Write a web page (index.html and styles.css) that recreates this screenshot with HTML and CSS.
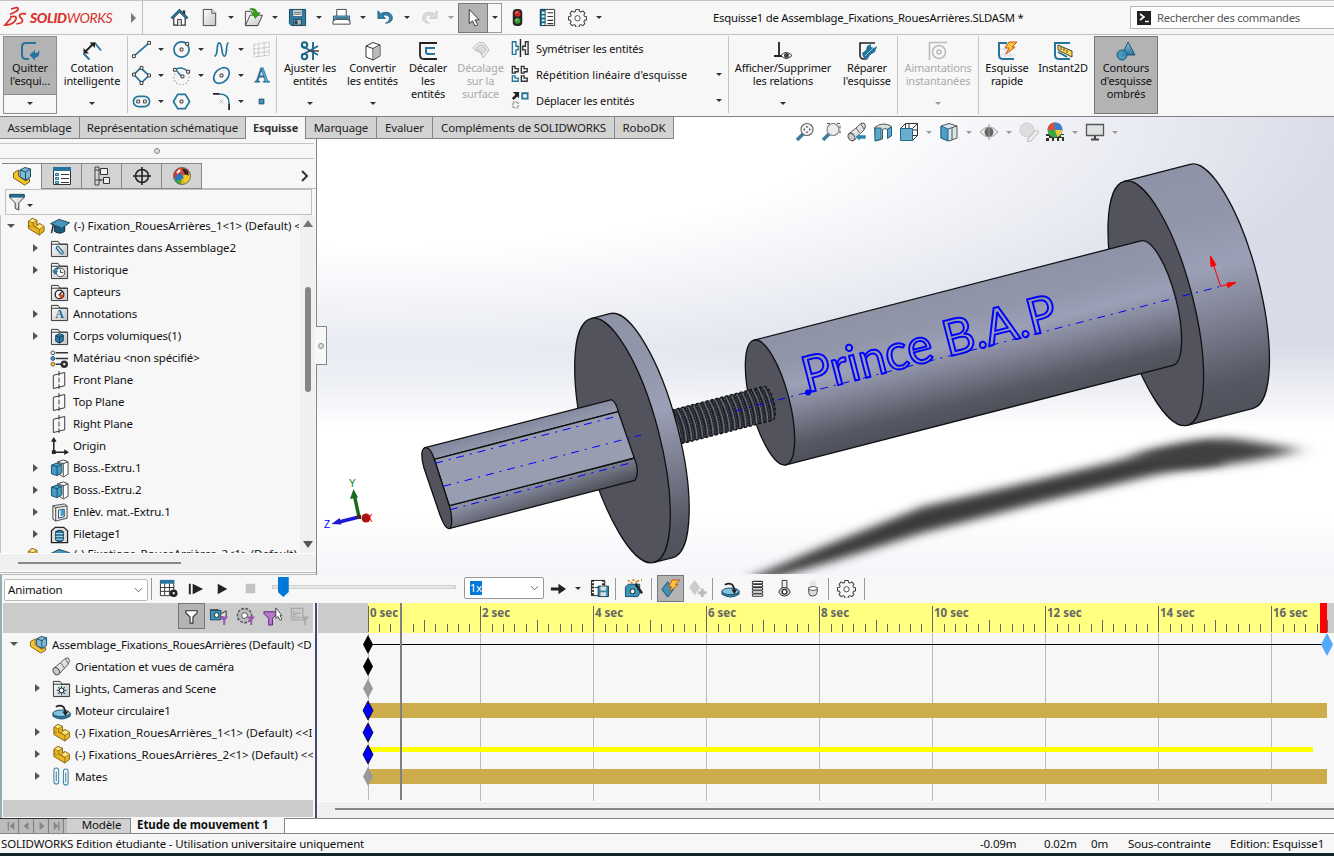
FILE: index.html
```html
<!DOCTYPE html>
<html lang="fr">
<head>
<meta charset="utf-8">
<title>SOLIDWORKS</title>
<link rel="stylesheet" href="styles.css">
</head>
<body>
<svg class="defs" width="0" height="0">
<defs>
<linearGradient id="blu" x1="0" y1="0" x2="0" y2="1"><stop offset="0" stop-color="#8ec6de"/><stop offset="1" stop-color="#24759c"/></linearGradient>
<linearGradient id="gry" x1="0" y1="0" x2="1" y2="1"><stop offset="0" stop-color="#fff"/><stop offset="1" stop-color="#c4c4c4"/></linearGradient>
<linearGradient id="body" x1="0" y1="0" x2="0" y2="1"><stop offset="0" stop-color="#8f93a8"/><stop offset=".22" stop-color="#9296ab"/><stop offset=".42" stop-color="#9ca0b6"/><stop offset=".6" stop-color="#828597"/><stop offset=".88" stop-color="#555762"/><stop offset="1" stop-color="#4f515b"/></linearGradient>
</defs>
<symbol id="home" viewBox="0 0 20 20"><path d="M4 10v8h12v-8L10 4z" fill="#fff" stroke="#333" stroke-width="1.3"/><path d="M8 18v-6h4v6" fill="#ddd" stroke="#333"/><path d="M13.5 2.500h2.500v4h-2.500z" fill="#333"/><path d="M1.500 11L10 2.500 18.500 11" fill="none" stroke="#16506f" stroke-width="2.600"/><path d="M2 11L10 3l8 8" fill="none" stroke="#3d9cc5" stroke-width="1"/></symbol>
<symbol id="page" viewBox="0 0 20 20"><path d="M3.500 1.500h9l4 4v13h-13z" fill="url(#gry)" stroke="#444"/><path d="M12.500 1.500v4h4" fill="#fff" stroke="#444"/></symbol>
<symbol id="open" viewBox="0 0 20 20"><path d="M1.500 3.500h6l1 2h6v13h-13z" fill="#eee" stroke="#444"/><path d="M1.500 18.500l5-11h13l-5 11z" fill="url(#gry)" stroke="#444"/><path d="M6 1c4-1 7 0 8 4h3l-5 6-4-6h3c-1-2-3-3-5-4z" fill="#36a315" stroke="#1e720a" stroke-width=".6"/></symbol>
<symbol id="save" viewBox="0 0 20 20"><path d="M1.500 1.500h17v17h-15l-2-2z" fill="#2f7da4" stroke="#17445d"/><path d="M5 2h10v7H5z" fill="#eef4f8" stroke="#17445d" stroke-width=".7"/><path d="M6 4.500h8M6 6.500h8" stroke="#555"/><path d="M6 12h8v6H6z" fill="#bbb" stroke="#17445d"/><path d="M7 13h3v4H7z" fill="#17445d"/></symbol>
<symbol id="print" viewBox="0 0 20 20"><path d="M5 9V1.500h10V9" fill="#fff" stroke="#444"/><path d="M1.500 8.500h17v7h-17z" fill="url(#blu)" stroke="#1b5877"/><path d="M1 14l3-2h12l3 2v3H1z" fill="#fff" stroke="#444"/><path d="M3 10.500h14" stroke="#124b66"/></symbol>
<symbol id="undo" viewBox="0 0 20 20"><path d="M2 3v8h8L7 8c5-2 8 1 7 4-.5 2-2 3-4 4 6 0 8-4 7-7-1-4-6-6-12-3z" fill="#2f83ad" stroke="#185572" stroke-width=".8"/></symbol>
<symbol id="redo" viewBox="0 0 20 20"><path d="M18 3v8h-8l3-3c-5-2-8 1-7 4 .5 2 2 3 4 4-6 0-8-4-7-7 1-4 6-6 12-3z" fill="#ddd" stroke="#c4c4c4" stroke-width=".8"/></symbol>
<symbol id="cursor" viewBox="0 0 20 20"><path d="M5.500 1.500v15l3.500-3 2.500 5.500 3-1.500-3-5h4.500z" fill="#fff" stroke="#333"/></symbol>
<symbol id="traffic" viewBox="0 0 20 20"><rect x="5" y="1" width="10" height="18" rx="4" fill="#292929"/><circle cx="10" cy="6" r="3" fill="#d9231a"/><circle cx="10" cy="13.500" r="3" fill="#38a02a"/><path d="M8 5l2-1M8 13l2-1" stroke="#fff" stroke-width=".8"/></symbol>
<symbol id="list" viewBox="0 0 20 20"><path d="M2.500 1.500h15v17h-15z" fill="#fff" stroke="#333"/><path d="M2.500 1.500h5v17h-5z" fill="#1e6c94" stroke="#18465f"/><path d="M4 4h3v2H4zM4 8h3v2H4zM4 12h3v2H4zM4 16h3v2H4z" fill="#dff"/><path d="M10 5h6M10 9h6M10 13h6M10 16.500h6" stroke="#333" stroke-width="1.200"/></symbol>
<symbol id="gear" viewBox="0 0 20 20"><path d="M8.300 1.500h3.400l.5 2.100 1.500.7 1.900-1.200 2.200 2.300-1.100 1.900.6 1.500 2.200.5v3.200l-2.200.5-.6 1.500 1.100 1.900-2.200 2.200-1.900-1.100-1.500.6-.5 2.200H8.300l-.5-2.200-1.500-.6-1.900 1.100-2.200-2.200 1.100-1.900-.6-1.500-2.200-.5V9.300l2.200-.5.6-1.500-1.100-1.900 2.200-2.300 1.900 1.200 1.500-.7z" fill="#f7f7f7" stroke="#444" stroke-width="1.100" stroke-linejoin="round"/><circle cx="10" cy="10.800" r="2.800" fill="#fff" stroke="#444"/></symbol>
<symbol id="exit" viewBox="0 0 20 20"><path d="M16 2H6q-4 0-4 4v8q0 4 4 4h3" fill="none" stroke="#24749b" stroke-width="2"/><path d="M9.500 14l5.500-5v3h1.500q2-.5 2.500-3.500 1.500 8-4 8v3z" fill="#24749b"/></symbol>
<symbol id="dim" viewBox="0 0 20 20"><path d="M1.500 12.500l6 6M12.500 1.500l6.500 8" stroke="#24749b" stroke-width="1.800"/><path d="M3 11l9-9" stroke="#222" stroke-width="2"/><path d="M1.500 7v5.500H7zM7.500 1.500H13V7z" fill="#222"/></symbol>
<symbol id="line" viewBox="0 0 20 20"><path d="M2 17L18 3" stroke="#24749b" stroke-width="1.800"/><path d="M.5 15.500h3v3h-3zM16.500 1.500h3v3h-3z" fill="#fff" stroke="#333"/></symbol>
<symbol id="circle" viewBox="0 0 20 20"><circle cx="10" cy="10" r="8" fill="none" stroke="#24749b" stroke-width="1.800"/><path d="M8.500 8.500h3v3h-3zM14.500 2.500h3v3h-3z" fill="#fff" stroke="#333"/></symbol>
<symbol id="spline" viewBox="0 0 20 20"><path d="M2.500 17C7 17 4 3 7.500 3c4 0 2 14 5.500 14 3.500 0 1-14 4.500-14" fill="none" stroke="#24749b" stroke-width="1.800"/></symbol>
<symbol id="planegray" viewBox="0 0 20 20"><path d="M2 5l16-3v14L2 18zM7 4v14M13 3v14M2 9.500l16-2M2 14l16-2" fill="none" stroke="#bbb" stroke-dasharray="2 1"/></symbol>
<symbol id="rect" viewBox="0 0 20 20"><path d="M2 9l7-7 9 8-8 7.500z" fill="none" stroke="#24749b" stroke-width="1.800"/><path d="M.5 7.500h3v3h-3zM8.500.5h3v3h-3zM16.500 8.500h3v3h-3zM8.500 16.500h3v3h-3z" fill="#fff" stroke="#333"/></symbol>
<symbol id="arc" viewBox="0 0 20 20"><path d="M3 8a8 8 0 1 0 14 0" fill="none" stroke="#aaa" stroke-width="1.500" stroke-dasharray="1.500 2"/><path d="M3 4c5-3 10-2 14 2M10 11L5 5" fill="none" stroke="#24749b" stroke-width="1.500"/><path d="M1.500 2.500h3v3h-3zM15.500 4.500h3v3h-3zM9.500 9.500h3v3h-3z" fill="#fff" stroke="#333"/></symbol>
<symbol id="ellipse" viewBox="0 0 20 20"><ellipse cx="10" cy="10" rx="9.500" ry="6.800" transform="rotate(-45 10 10)" fill="none" stroke="#24749b" stroke-width="1.800"/><path d="M8.500 8.500h3v3h-3z" fill="#fff" stroke="#333"/></symbol>
<symbol id="slot" viewBox="0 0 20 20"><rect x="1.500" y="4.500" width="17" height="11" rx="5.500" fill="#f7f7f7" stroke="#24749b" stroke-width="1.800"/><path d="M5 8.500h3v3H5zM12 8.500h3v3h-3z" fill="#fff" stroke="#333"/></symbol>
<symbol id="hex" viewBox="0 0 20 20"><path d="M6 2.500h8l4.500 7.500-4.500 7.500H6L1.500 10z" fill="none" stroke="#24749b" stroke-width="1.800"/><path d="M8.500 8.500h3v3h-3z" fill="#fff" stroke="#333"/></symbol>
<symbol id="fillet" viewBox="0 0 20 20"><path d="M1 2h7M18 12v7" stroke="#222" stroke-width="1.800"/><path d="M8 2c7 0 10 3 10 10" fill="none" stroke="#24749b" stroke-width="1.600"/><path d="M8 8l4 4M12 8l-4 4" stroke="#aaa" stroke-width=".8"/></symbol>
<symbol id="point" viewBox="0 0 20 20"><path d="M7.500 7.500h5v5h-5z" fill="#4097c0" stroke="#17506c"/></symbol>
<symbol id="trim" viewBox="0 0 20 20"><path d="M13 1v18M2 14L18 5M2 5l16 9" stroke="#247095" stroke-width="2"/><circle cx="4.500" cy="4" r="2.700" fill="none" stroke="#1b668b" stroke-width="2"/><circle cx="4.500" cy="15.500" r="2.700" fill="none" stroke="#1b668b" stroke-width="2"/><path d="M8 10h11" stroke="#444" stroke-width="1.500"/></symbol>
<symbol id="convert" viewBox="0 0 20 20"><path d="M3 5l7-3.500L17 4v11l-7 4-7-3z" fill="#fff" stroke="#333"/><path d="M3 5l7 2.500L17 4M10 7.500V19" fill="none" stroke="#333"/><path d="M10.500 8L16.500 5v9.500l-6 3.500z" fill="#bbb"/></symbol>
<symbol id="offset" viewBox="0 0 20 20"><path d="M19 2H2v12q0 4 4 4h13" fill="none" stroke="#222" stroke-width="1.800"/><path d="M17 7H8v4q0 2 2 2h7" fill="none" stroke="#24749b" stroke-width="2"/></symbol>
<symbol id="surf" viewBox="0 0 20 20"><path d="M2 7q7-9 12-4l4 6-6 8q-2-7-7-7z" fill="#eee" stroke="#bbb"/><path d="M5 7q5-5 8-2l2 4-4 4q-2-4-5-4z" fill="#ddd" stroke="#bbb"/></symbol>
<symbol id="mirror" viewBox="0 0 20 20"><path d="M10.500 0v20" stroke="#222" stroke-width="1.600"/><path d="M1.500 3h4v5H8v4H5.500v5h-4z" fill="none" stroke="#24749b" stroke-width="1.500"/><path d="M19 3h-3v5h-3v4h3v5h3z" fill="none" stroke="#333" stroke-width="1.500"/></symbol>
<symbol id="pattern" viewBox="0 0 20 20"><g fill="none" stroke-width="1.500"><g stroke="#333"><path d="M1.500 1.500h3v2.500H8v3.500H4.500v1.500h-3zM11.500 1.500h3v2.500H18v3.500h-3.500v1.500h-3zM11.500 12h3v2.500H18v3.500h-6.500z"/></g><path d="M1.500 12h3v2.500H8v3.500H1.500z" stroke="#24749b"/></g></symbol>
<symbol id="move" viewBox="0 0 20 20"><path d="M2 1h7v7L7 6l-4 4-2-2 4-4z" fill="#222"/><path d="M12.500 2.500h6v6h-6z" fill="#fff" stroke="#24749b" stroke-width="2"/><path d="M2 12.500h6v6H2z" fill="none" stroke="#aaa" stroke-width="2" stroke-dasharray="2 1"/></symbol>
<symbol id="rel" viewBox="0 0 20 20"><path d="M6 1v14M1 15h9" stroke="#222" stroke-width="1.800"/><path d="M8 14.500q5-6 11 0-6 6-11 0z" fill="#fff" stroke="#333"/><circle cx="13.500" cy="14.500" r="2.500" fill="#444"/></symbol>
<symbol id="repair" viewBox="0 0 20 20"><path d="M18 2H3v12q0 4 4 4h2" fill="none" stroke="#222" stroke-width="1.600"/><path d="M6 16l4 3 3-5 5-3 2-6-3 2-3-1V3l-4 2-1 4-4 3z" fill="#24749b"/><path d="M8 15l8-8" stroke="#8cc8e2"/></symbol>
<symbol id="snap" viewBox="0 0 20 20"><path d="M1.500 19V1.500H19" fill="none" stroke="#bbb" stroke-width="1.600"/><circle cx="11" cy="11" r="6.500" fill="none" stroke="#bbb" stroke-width="1.600"/><circle cx="11" cy="11" r="2" fill="none" stroke="#bbb" stroke-width="1.600"/></symbol>
<symbol id="rapid" viewBox="0 0 20 20"><path d="M8 3v15M13 3v16M3 8h16M3 14h16" stroke="#ccc" stroke-width=".7"/><path d="M10 2H2v12q0 4 4 4h11" fill="none" stroke="#24749b" stroke-width="2"/><path d="M12 1h8l-5 5h3l-9 7 3-6H8z" fill="#fcc33c" stroke="#c25519"/></symbol>
<symbol id="inst" viewBox="0 0 20 20"><path d="M17 2H2v12q0 4 4 4h11" fill="none" stroke="#24749b" stroke-width="2"/><path d="M5 4l14 6v6L5 9z" fill="#ffd94b" stroke="#444"/><path d="M8 6v3M11 7v3M14 9v3" stroke="#444"/><path d="M5 11l9 5" stroke="#24749b" stroke-width="2"/></symbol>
<symbol id="shaded" viewBox="0 0 20 20"><path d="M12 1l7 13H6z" fill="url(#blu)" stroke="#1b5877"/><circle cx="6" cy="14" r="5" fill="#3990b8" fill-opacity=".85" stroke="#1b5877"/></symbol>
<symbol id="zoomfit" viewBox="0 0 20 20"><path d="M8 12l-6 6" stroke="#3d7e9f" stroke-width="3.500"/><circle cx="12" cy="7.500" r="6" fill="#f5f7fa" stroke="#666" stroke-width="1.200"/><path d="M12 3.500l1.500 2h-3zM12 11.500l1.500-2h-3zM8 7.500l2-1.500v3zM16 7.500l-2-1.500v3z" fill="#555"/></symbol>
<symbol id="zoomarea" viewBox="0 0 20 20"><path d="M6 1.500h13v12" fill="none" stroke="#555" stroke-dasharray="3 2"/><path d="M8 12l-6 6" stroke="#3d7e9f" stroke-width="3.500"/><circle cx="12" cy="7.500" r="6" fill="#e9edf1" stroke="#888" stroke-width="1.200"/></symbol>
<symbol id="scope" viewBox="0 0 20 20"><path d="M1.500 12L9 6l5-4.500 3-.5 1.500 3-1.500 4-4 4-5.500 6z" fill="url(#gry)" stroke="#555"/><ellipse cx="4.500" cy="15" rx="3" ry="4" transform="rotate(-35 4.500 15)" fill="#ccc" stroke="#555"/><path d="M9 6l4.500 6M14 2l3 5" stroke="#666"/></symbol>
<symbol id="prev" viewBox="0 0 20 20"><use href="#scope"/><path d="M8 15l5-4v2h6v4h-6v2z" fill="#2a84ad" stroke="#f5f5f5" stroke-width=".6"/></symbol>
<symbol id="section" viewBox="0 0 20 20"><path d="M1.500 5.500Q10-1 18.500 4.500v9l-4 3v-9q-3-2-5 0V17l-7 2z" fill="#ddd" stroke="#555"/><path d="M2 6h6v11l-6 2zM14.500 7l4-2v9l-4 2z" fill="#5ba7c9" stroke="#1f688c"/></symbol>
<symbol id="orient" viewBox="0 0 20 20"><path d="M6.500 1.500h12v12h-12zM1.500 6.500l5-5M13.500 18.500l5-5M13.500 6.500l5-5M10 2v5M14 8h4" fill="none" stroke="#333"/><path d="M1.500 6.500h12v12h-12z" fill="#69afcd" stroke="#1f688c"/></symbol>
<symbol id="display" viewBox="0 0 20 20"><path d="M2 4l8-2.500L18 4v12l-8 3-8-3z" fill="#d7e7ee" stroke="#555"/><path d="M2 4l7 3v12l-7-3z" fill="#4d9fc3" stroke="#1f688c"/><path d="M9 7l9-3M13 6v12" stroke="#555"/></symbol>
<symbol id="eye" viewBox="0 0 20 20"><path d="M1 10q9-10 18 0-9 10-18 0z" fill="#eee" stroke="#999"/><circle cx="10" cy="10" r="4.500" fill="#666"/><path d="M10 2v16" stroke="#999"/></symbol>
<symbol id="editapp" viewBox="0 0 20 20"><circle cx="8" cy="8" r="7" fill="#ddd" stroke="#ccc"/><path d="M9 17l8-9 3 2-8 9-4 1z" fill="#eee" stroke="#bbb"/></symbol>
<symbol id="ball" viewBox="0 0 20 20"><circle cx="10" cy="10" r="8.500" fill="#f1c928"/><path d="M10 10L2 13Q0 4 8 1.700z" fill="#d9392e"/><path d="M10 10L8 1.700Q16 1 18 7z" fill="#d44a38"/><path d="M10 10l8-3q2 7-5 11z" fill="#f1c928"/><path d="M10 10l3 8q-3 1-5 0z" fill="#e9b51e"/><path d="M10 10L2 13q2 5 7 5.500z" fill="#3fa73c"/><path d="M3 10l6-3 3 5-8 3z" fill="#2b74c0"/><circle cx="10" cy="10" r="8.500" fill="none" stroke="#555" stroke-width=".8"/><path d="M10 2.500q6 0 7 7l-4-1z" fill="#292929"/><path d="M5 7l3-3" stroke="#fff" stroke-width="2"/></symbol>
<symbol id="sceneball" viewBox="0 0 20 20"><path d="M1 12h18v7H1z" fill="#333"/><path d="M1 14h3v2H1zM4 16h3v3H4zM9 16h3v3H9zM14 16h3v3h-3zM16 13h3v2h-3z" fill="#eee"/><circle cx="10" cy="8" r="7.500" fill="#3aa648"/><path d="M10 8H2.500A7.500 7.500 0 0 1 9 .6z" fill="#e24b3a"/><path d="M10 8L9 .6q8-1 8.500 7.400z" fill="#3b7fd1"/><path d="M10 8h7.500q-1 5-5 7z" fill="#e9c83d"/></symbol>
<symbol id="monitor" viewBox="0 0 20 20"><path d="M1.500 2.500h17v11h-17z" fill="#dde3e3" stroke="#555" stroke-width="1.300"/><path d="M10 14v3M6 17.500h8" stroke="#444" stroke-width="2"/></symbol>
<symbol id="part" viewBox="0 0 20 20"><path d="M2 4.500l4-3 5 2V8l3-1 4.500 3v5l-5 4L2 12z" fill="#e9b51e" stroke="#806017"/><path d="M2 4.500l4-3 5 2-4 2.500zM9 10.500L14 7l4.500 3-5 3z" fill="#ffe57a" stroke="#806017" stroke-width=".7"/><path d="M7 6v4l2 .5 4.500 2.500v6M2 9l3 1" fill="none" stroke="#806017" stroke-width=".8"/></symbol>
<symbol id="assem" viewBox="0 0 20 20"><path d="M1.500 7l5-3v6l7 5 4-2v3l-5 3-11-7z" fill="#f4c42c" stroke="#806017"/><path d="M8 4l5-2.500L18.500 3v8l-5 3L8 11z" fill="#7fbbd6" stroke="#1a4d68"/><path d="M8 4l5.500 2 5-3M13.500 6v8" fill="none" stroke="#1a4d68"/></symbol>
<symbol id="props" viewBox="0 0 20 20"><path d="M1.500 1.500h17v17h-17z" fill="#fff" stroke="#333"/><path d="M1 1h18v4H1z" fill="#24749b"/><path d="M3.500 7.500h3v2h-3zM3.500 11.500h3v2h-3zM3.500 15.500h3v2h-3z" fill="#9cd" stroke="#24749b"/><path d="M9 8.500h8M9 12.500h8M9 16.500h8" stroke="#333" stroke-width="1.200"/></symbol>
<symbol id="config" viewBox="0 0 20 20"><path d="M3 1v18M3 4h6M3 14h6M3 1h4v18H3" fill="none" stroke="#444"/><path d="M8.500 2.500h7v6h-7zM11.500 11.500h6v6h-6z" fill="#eee" stroke="#333"/><path d="M7 14h4" stroke="#333"/></symbol>
<symbol id="target" viewBox="0 0 20 20"><circle cx="10" cy="10" r="6.500" fill="none" stroke="#222" stroke-width="1.600"/><path d="M10 1v18M1 10h18" stroke="#222" stroke-width="1.600"/></symbol>
<symbol id="funnel" viewBox="0 0 20 20"><path d="M2 2h16v3l-6 6v8l-4-2v-6L2 5z" fill="url(#gry)" stroke="#333"/><path d="M2 1.500h16v3H2z" fill="#24749b" stroke="#17506c"/></symbol>
<symbol id="cap" viewBox="0 0 20 20"><path d="M4 10v5q6 4 11 0v-5z" fill="#1e5c7e" stroke="#123"/><path d="M0 7l9-4.500L20 6l-8 6z" fill="#4596ba" stroke="#15425a"/><path d="M3 8l-2 9" stroke="#222" stroke-width="1.500"/></symbol>
<symbol id="folder" viewBox="0 0 20 20"><path d="M1.500 18.500v-16h7l2 3h8v13z" fill="url(#gry)" stroke="#333"/><path d="M1.500 5.500h17" stroke="#333"/></symbol>
<symbol id="fmate" viewBox="0 0 20 20"><use href="#folder"/><path d="M6 9l5 6q3 2 3-1L9 8q-3-1-2 2l4 5" fill="none" stroke="#24749b" stroke-width="1.300"/></symbol>
<symbol id="fhist" viewBox="0 0 20 20"><use href="#folder"/><circle cx="11" cy="12" r="4.500" fill="#fff" stroke="#444"/><path d="M4 11q1-5 6-4M3 10l2 4 3-3z" fill="#24749b" stroke="#24749b"/><path d="M11 9v3h3" stroke="#333" fill="none"/></symbol>
<symbol id="fsens" viewBox="0 0 20 20"><use href="#folder"/><circle cx="10" cy="12" r="4.500" fill="#fff" stroke="#222" stroke-width="1.400"/><path d="M10 12h4.500A4.500 4.500 0 0 1 10 16.500z" fill="#e4421f"/><path d="M9 13l4-4" stroke="#222" stroke-width="1.300"/></symbol>
<symbol id="fbody" viewBox="0 0 20 20"><use href="#folder"/><path d="M6 9l4-2 4 1.500v6L10 17l-4-2z" fill="#2a7ba3" stroke="#113f57"/><path d="M6 9l4 2 4-2M10 11v6" fill="none" stroke="#0d3a52"/></symbol>
<symbol id="flight" viewBox="0 0 20 20"><use href="#folder"/><path d="M10 7v10M5 12h10M6.500 8.500l7 7M13.500 8.500l-7 7" stroke="#1d5f82" stroke-width="1.200"/><circle cx="10" cy="12" r="2.500" fill="#fff" stroke="#222"/></symbol>
<symbol id="mat" viewBox="0 0 20 20"><path d="M6 4h13M6 10h13M6 16h6" stroke="#333" stroke-width="1.600"/><circle cx="3" cy="4" r="2" fill="#eee" stroke="#444"/><circle cx="3" cy="10" r="2" fill="#4ba3ce" stroke="#246"/><circle cx="3" cy="16" r="2" fill="#fcc530" stroke="#754"/><circle cx="15" cy="16" r="2.600" fill="#fff" stroke="#333" stroke-width="2.800"/></symbol>
<symbol id="plane" viewBox="0 0 20 20"><path d="M3.500 4.500l12-3v14l-12 3z" fill="none" stroke="#333"/><path d="M9.500 0v20" stroke="#333" stroke-dasharray="5 2"/></symbol>
<symbol id="origin" viewBox="0 0 20 20"><path d="M4 3v13h13" fill="none" stroke="#222" stroke-width="1.600"/><path d="M4 0l3 5H1zM20 16l-5 3v-6zM2 14h4v4H2z" fill="#222"/></symbol>
<symbol id="boss" viewBox="0 0 20 20"><path d="M8 3l6-2 5 2v13l-5 3-4-3z" fill="#fff" stroke="#444"/><path d="M14 4v14M8 3l6 2 5-2" fill="none" stroke="#444"/><path d="M1.500 6.500l5-2 6 1v9l-5 3-6-2z" fill="#459cc2" stroke="#1a4d68"/><path d="M1.500 6.500l6 1.500 5-2.500M7.500 8v9" fill="none" stroke="#1a4d68"/></symbol>
<symbol id="cut" viewBox="0 0 20 20"><path d="M3 3l12-2 3 2v13L6 19l-3-2z" fill="#eee" stroke="#444"/><path d="M6 5l12-2M6 5v14M3 3l3 2" stroke="#444" fill="none"/><path d="M9 7.500l6-1v8l-6 1.500z" fill="#fff" stroke="#246"/><path d="M11 8l4-1v6l-4 1z" fill="#4a9ec4"/></symbol>
<symbol id="thread" viewBox="0 0 20 20"><path d="M1.500 18.500V6l4-3.500h9l4 3.500v12.500z" fill="#ddd" stroke="#222" stroke-width="1.300"/><path d="M6 7q4-3 8 0v9l-4 2-4-2z" fill="#2a7ba3" stroke="#123"/><path d="M6 9h8M6 12h8M6 15h8" stroke="#bde" /></symbol>
<symbol id="motor" viewBox="0 0 20 20"><path d="M1 13v3q9 6 18 0v-3z" fill="#2f83ab" stroke="#164b67"/><ellipse cx="10" cy="13" rx="9" ry="3.500" fill="#83c3df" stroke="#164b67"/><path d="M4 6q9-4 10 6" fill="none" stroke="#222" stroke-width="1.900"/><path d="M11 11h6l-3 5z" fill="#222"/></symbol>
<symbol id="clips" viewBox="0 0 20 20"><path d="M2 6v9q0 3 2.500 3T7 15V4q0-3-2.500-3T2 4v8M4.500 5v10M12 7v9q0 3 2.500 3t2.500-3V5q0-3-2.500-3T12 5v8M14.500 6v10" fill="none" stroke="#3b86aa" stroke-width="1.100"/></symbol>
<symbol id="calc" viewBox="0 0 20 20"><path d="M1.500 1.500h14v16h-14z" fill="#fff" stroke="#333"/><path d="M1 1h15v4H1z" fill="#24749b"/><path d="M1 9h15M1 13h12M6 5v12M11 5v12" stroke="#333"/><circle cx="15.500" cy="15" r="2.600" fill="#fff" stroke="#222" stroke-width="2.800"/></symbol>
<symbol id="film" viewBox="0 0 20 20"><path d="M1.500 1.500h14v16h-14z" fill="#fff" stroke="#222"/><path d="M3 1v17M14 1v10" stroke="#222" stroke-width="2.500" stroke-dasharray="2 1.500"/><path d="M5 9h8" stroke="#222"/><path d="M8.500 7.500h11v11h-11z" fill="#3786ac" stroke="#17445d"/><path d="M11 8h6v4h-6zM11 14h6v4h-6z" fill="#ddd"/></symbol>
<symbol id="wizard" viewBox="0 0 20 20"><path d="M1.500 8.500l3-3h12v10l-2 3h-13z" fill="#3d93b9" stroke="#164b67"/><circle cx="9" cy="13" r="2.500" fill="#fff" stroke="#222"/><path d="M12 5l7 10" stroke="#222" stroke-width="2.500"/><path d="M4 2h2M9 1h2M14 2h2M18 1h1M7 4h2M12 3h2" stroke="#d9861a" stroke-width="2"/></symbol>
<symbol id="autokey" viewBox="0 0 20 20"><path d="M7 3l6 8-6 8-6-8z" fill="#3d93b9" stroke="#164b67"/><path d="M12 1h8l-5 5h3l-9 7 2-5H8z" fill="#fcc33c" stroke="#c25519"/></symbol>
<symbol id="addkey" viewBox="0 0 20 20"><path d="M7 1l6 8-6 8-6-8z" fill="#ccc"/><path d="M15 10v9M10.500 14.500h9" stroke="#bbb" stroke-width="3"/></symbol>
<symbol id="spring" viewBox="0 0 20 20"><g fill="#fff" stroke="#333" stroke-width="1.100"><rect x="4.500" y="2.500" width="11" height="2.500" rx="1.200"/><rect x="4.500" y="5.800" width="11" height="2.500" rx="1.200"/><rect x="4.500" y="9.100" width="11" height="2.500" rx="1.200"/><rect x="4.500" y="12.400" width="11" height="2.500" rx="1.200"/><rect x="4.500" y="15.700" width="11" height="2.500" rx="1.200"/></g></symbol>
<symbol id="contact" viewBox="0 0 20 20"><path d="M7.500 1.500h5v8h-5z" fill="#eee" stroke="#333"/><path d="M4 14q1-5 6-5t6 5q-2 4-6 4t-6-4z" fill="#ccc" stroke="#333"/><circle cx="10" cy="13.500" r="2.500" fill="#fff" stroke="#333" stroke-width="1.400"/></symbol>
<symbol id="gravity" viewBox="0 0 20 20"><circle cx="10.500" cy="5" r="3.500" fill="#e5e5e5"/><path d="M6 9v5q0 4 4 4t5-4V9z" fill="#ddd" stroke="#444"/><ellipse cx="10.500" cy="10" rx="4.500" ry="2" fill="#fff" stroke="#555"/></symbol>
<symbol id="ffun" viewBox="0 0 20 20"><path d="M4 4h12v2l-4.500 4.500V17h-3v-6.500L4 6z" fill="#fff" stroke="#333" stroke-width="1.200"/></symbol>
<symbol id="mini" viewBox="0 0 20 20"><path d="M11 10h9l-3 4v5h-2v-5z" fill="#9b55b5"/></symbol>
<symbol id="fcam" viewBox="0 0 20 20"><path d="M1.500 3.500h11v10h-11z" fill="#3d93b9" stroke="#164b67"/><path d="M1 3h9M13 7l5-3v8l-5-2" stroke="#222" fill="#ddd"/><circle cx="8" cy="8.500" r="2.500" fill="#fff" stroke="#222"/><use href="#mini"/></symbol>
<symbol id="fgear" viewBox="0 0 20 20"><circle cx="9" cy="9" r="7.500" fill="#bbb" stroke="#555" stroke-width="1.600" stroke-dasharray="3 1.500"/><circle cx="9" cy="9" r="3" fill="#fff" stroke="#444"/><use href="#mini"/></symbol>
<symbol id="fsel" viewBox="0 0 20 20"><path d="M1 5h14v2l-5 5v7H6v-7L1 7z" fill="#b377cb" stroke="#5b2875"/><path d="M13.500 1v11l2.500-2 2 4 2-1-2-4h2z" fill="#fff" stroke="#222" stroke-width=".8"/></symbol>
<symbol id="fres" viewBox="0 0 20 20"><path d="M1.500 1.500h12v12h-12zM4 4v7h7M5 8l3-2 3 1" fill="none" stroke="#aaa" stroke-width="1.400"/><path d="M12 10h8l-3 4v5h-2v-5z" fill="#aaa"/></symbol>
</svg>

<header class="titlebar">
  <div class="brand">
    <svg width="24" height="26" viewBox="0 0 24 26"><path d="M8 4l6-1.500q3 1-1 4L7 9.500M7 12q7-2 6 2-2 6-11 6l6-7M23 9q-6-1-6.500 1.500 0 1.500 2 3 2.500 3-1 4.500l-4 1" fill="none" stroke="#d9322a" stroke-width="1.800"/></svg>
    <span class="logotype"><b>SOLID</b>WORKS</span>
  </div>
  <i class="right big"></i>
  <div class="quick">
    <span class="cell"><svg><use href="#home"/></svg></span>
    <span class="cell"><svg><use href="#page"/></svg></span><i class="dn"></i>
    <span class="cell"><svg><use href="#open"/></svg></span><i class="dn"></i>
    <span class="cell"><svg><use href="#save"/></svg></span><i class="dn"></i>
    <span class="cell"><svg><use href="#print"/></svg></span><i class="dn"></i>
    <span class="cell"><svg><use href="#undo"/></svg></span><i class="dn"></i>
    <span class="cell"><svg><use href="#redo"/></svg></span><i class="dn off"></i>
    <span class="cell pressed"><svg><use href="#cursor"/></svg></span><span class="split"><i class="dn"></i></span>
    <span class="cell"><svg><use href="#traffic"/></svg></span>
    <span class="cell"><svg><use href="#list"/></svg></span>
    <span class="cell"><svg><use href="#gear"/></svg></span><i class="dn"></i>
  </div>
  <div class="doc"><span class="t-doc">Esquisse1 de Assemblage_Fixations_RouesArrières.SLDASM *</span></div>
  <div class="search"><span class="prompt"><svg width="14" height="14" viewBox="0 0 14 14"><path d="M3 3l4 3-4 3M8 10.500h4" fill="none" stroke="#fff" stroke-width="1.600"/></svg></span><span>Rechercher des commandes</span></div>
</header>

<section class="ribbon">
  <div class="rb quit"><div class="face"><svg><use href="#exit"/></svg><span>Quitter<br>l'esqui...</span></div><div class="drop"><i class="dn"></i></div></div>
  <div class="rb w70"><svg><use href="#dim"/></svg><span>Cotation<br>intelligente</span><i class="dn"></i></div>
  <div class="tools">
    <svg><use href="#line"/></svg><i class="dn"></i><svg><use href="#circle"/></svg><i class="dn"></i><svg><use href="#spline"/></svg><i class="dn"></i><svg><use href="#planegray"/></svg>
    <svg><use href="#rect"/></svg><i class="dn"></i><svg><use href="#arc"/></svg><i class="dn"></i><svg><use href="#ellipse"/></svg><i class="dn"></i><span class="txticon">A</span>
    <svg><use href="#slot"/></svg><i class="dn"></i><svg><use href="#hex"/></svg><i></i><svg><use href="#fillet"/></svg><i class="dn"></i><svg><use href="#point"/></svg>
  </div>
  <div class="rb w62"><svg><use href="#trim"/></svg><span>Ajuster les<br>entités</span><i class="dn"></i></div>
  <div class="rb w63"><svg><use href="#convert"/></svg><span>Convertir<br>les entités</span><i class="dn"></i></div>
  <div class="rb w48"><svg><use href="#offset"/></svg><span>Décaler<br>les<br>entités</span></div>
  <div class="rb w57 dis"><svg><use href="#surf"/></svg><span>Décalage<br>sur la<br>surface</span></div>
  <div class="rlist">
    <div><svg><use href="#mirror"/></svg><span>Symétriser les entités</span></div>
    <div><svg><use href="#pattern"/></svg><span class="wide">Répétition linéaire d'esquisse</span><i class="dn"></i></div>
    <div><svg><use href="#move"/></svg><span>Déplacer les entités</span><i class="dn"></i></div>
  </div>
  <div class="rb w108"><svg><use href="#rel"/></svg><span>Afficher/Supprimer<br>les relations</span><i class="dn"></i></div>
  <div class="rb w61 sep"><svg><use href="#repair"/></svg><span>Réparer<br>l'esquisse</span></div>
  <div class="rb w81 sep dis"><svg><use href="#snap"/></svg><span>Aimantations<br>instantanées</span><i class="dn"></i></div>
  <div class="rb w56"><svg><use href="#rapid"/></svg><span>Esquisse<br>rapide</span></div>
  <div class="rb w56"><svg><use href="#inst"/></svg><span>Instant2D</span></div>
  <div class="rb on"><svg><use href="#shaded"/></svg><span>Contours<br>d'esquisse<br>ombrés</span></div>
</section>

<main class="work">
  <div class="top">
    <nav class="cmdtabs">
      <span class="ct1">Assemblage</span><span class="ct2">Représentation schématique</span><span class="ct3 act">Esquisse</span><span class="ct4">Marquage</span><span class="ct5">Evaluer</span><span class="ct6">Compléments de SOLIDWORKS</span><span class="ct7">RoboDK</span>
    </nav>
    <div class="hud">
      <svg><use href="#zoomfit"/></svg><svg><use href="#zoomarea"/></svg><svg><use href="#prev"/></svg><svg><use href="#section"/></svg><svg><use href="#orient"/></svg><i class="dn"></i><svg><use href="#display"/></svg><i class="dn"></i><svg><use href="#eye"/></svg><i class="dn"></i><svg><use href="#editapp"/></svg><svg><use href="#sceneball"/></svg><i class="dn"></i><svg><use href="#monitor"/></svg><i class="dn"></i>
    </div>
  </div>
  <div class="split2">
    <aside class="panel">
      <div class="grip"><i></i></div>
      <nav class="ptabs">
        <span class="act"><svg><use href="#assem"/></svg></span><span><svg><use href="#props"/></svg></span><span><svg><use href="#config"/></svg></span><span><svg><use href="#target"/></svg></span><span><svg><use href="#ball"/></svg></span>
        <svg class="chev" viewBox="0 0 10 12"><path d="M2 1l5 5-5 5" fill="none" stroke="#333" stroke-width="2"/></svg>
      </nav>
      <div class="filter"><svg><use href="#funnel"/></svg><i class="dn"></i></div>
      <div class="treebox">
        <ul class="tree">
          <li class="root"><i class="dn"></i><svg><use href="#part"/></svg><svg><use href="#cap"/></svg><span class="n1">(-) Fixation_RouesArrières_1&lt;1&gt; (Default) &lt;</span></li>
          <li><i class="right"></i><svg><use href="#fmate"/></svg><span>Contraintes dans Assemblage2</span></li>
          <li><i class="right"></i><svg><use href="#fhist"/></svg><span>Historique</span></li>
          <li><i></i><svg><use href="#fsens"/></svg><span>Capteurs</span></li>
          <li><i class="right"></i><span class="afold"><svg><use href="#folder"/></svg><b>A</b></span><span>Annotations</span></li>
          <li><i class="right"></i><svg><use href="#fbody"/></svg><span>Corps volumiques(1)</span></li>
          <li><i></i><svg><use href="#mat"/></svg><span>Matériau &lt;non spécifié&gt;</span></li>
          <li><i></i><svg><use href="#plane"/></svg><span>Front Plane</span></li>
          <li><i></i><svg><use href="#plane"/></svg><span>Top Plane</span></li>
          <li><i></i><svg><use href="#plane"/></svg><span>Right Plane</span></li>
          <li><i></i><svg><use href="#origin"/></svg><span>Origin</span></li>
          <li><i class="right"></i><svg><use href="#boss"/></svg><span>Boss.-Extru.1</span></li>
          <li><i class="right"></i><svg><use href="#boss"/></svg><span>Boss.-Extru.2</span></li>
          <li><i class="right"></i><svg><use href="#cut"/></svg><span>Enlèv. mat.-Extru.1</span></li>
          <li><i class="right"></i><svg><use href="#thread"/></svg><span>Filetage1</span></li>
          <li class="root last"><i class="none"></i><svg><use href="#part"/></svg><svg><use href="#cap"/></svg><span class="n1">(-) Fixations_RouesArrières_2&lt;1&gt; (Default)</span></li>
        </ul>
        <div class="vbar"><i class="up"></i><b></b><i class="down"></i></div>
      </div>
      <div class="hbar"><b></b></div>
      <div class="edge"></div>
    </aside>
    <div class="view">
      <div class="handle"><i></i></div>
      <svg class="scene" viewBox="318 139 1016 435">
        <defs>
          <filter id="soft" x="-10%" y="-20%" width="120%" height="140%"><feGaussianBlur stdDeviation="5"/></filter>
          <filter id="softer" x="-20%" y="-60%" width="140%" height="220%"><feGaussianBlur stdDeviation="11 5"/></filter>
          <linearGradient id="low" gradientUnits="userSpaceOnUse" x1="540" y1="480" x2="549" y2="507"><stop offset="0" stop-color="#8d91a4"/><stop offset="1" stop-color="#4e505a"/></linearGradient>
          <linearGradient id="high" gradientUnits="userSpaceOnUse" x1="518" y1="423" x2="522" y2="437"><stop offset="0" stop-color="#8488a0"/><stop offset="1" stop-color="#9498ac"/></linearGradient>
          <pattern id="thr" width="5.600" height="40" patternUnits="userSpaceOnUse" y="-20"><path d="M0 0h5.600v40H0z" fill="#1d1e23"/><path d="M-1 0Q5 20 0 40M4.600 0Q10.600 20 5.600 40" fill="none" stroke="#7d8091" stroke-width="1.300"/><path d="M2.500 0Q6 20 3 40" fill="none" stroke="#777a8a" stroke-dasharray="1 1.500"/></pattern>
        </defs>
        <path d="M745 580L820 548 922 507 1038 480 1154 452 1210 444 1225 462 1154 475 1038 503 922 533 830 562 760 582z" fill="#3a3a3a" filter="url(#soft)"/>
        <path d="M1130 458Q1185 438 1230 438 1270 444 1300 450 1250 464 1190 468z" fill="#404040" filter="url(#softer)"/>
        <g stroke="#111" stroke-width="1.300" stroke-linejoin="round">
          <g transform="translate(1155.800 303.300) rotate(-14.500)"><path d="M0-126H68A37.100 126 0 0 1 68 126H0z" fill="url(#body)"/><ellipse rx="37.100" ry="126" fill="#52535d"/></g>
          <g transform="translate(770 402.500) rotate(-14.400)"><path d="M0-64.300H399.500A19.400 64.300 0 0 1 399.500 64.300H0z" fill="url(#body)"/><ellipse rx="19.400" ry="64.300" fill="#52535d"/></g>
          <g transform="translate(676 427) rotate(-14.400)"><path d="M0-17.500H95A6 17.500 0 0 1 95 17.500H0z" fill="url(#thr)" stroke-dasharray="3 2"/></g>
          <g transform="translate(622.500 440.500) rotate(-14.500)"><path d="M0-126H19.500A37.100 126 0 0 1 19.500 126H0z" fill="url(#body)"/><ellipse rx="37.100" ry="126" fill="#52535d"/></g>
          <path d="M425 447.700L611.700 399.700Q616 402 618.300 411.700L434.300 459.300z" fill="url(#high)"/>
          <path d="M449.300 505.700L634.300 458Q640 472 635 480.300L449 528.700z" fill="url(#low)"/>
          <path d="M434.300 459.300L618.300 411.700 634.300 458 449.300 505.700z" fill="#999db1"/>
          <path d="M425 447.700C430 447 433 455 434.300 459.300L449.300 505.700C452 514 453 528 449 528.700 446 529 443 523 440 515L424 468C421 458 421 449 425 447.700z" fill="#52535d"/>
        </g>
        <g fill="none" stroke="#00f" stroke-width="1" stroke-dasharray="8 6 2 6"><path d="M435 463.300L615 416.700M443.300 486.300L641 435M450 509.700L633 462.300"/><path d="M735 411L1220 286.500"/></g>
        <text class="sketch" transform="translate(807 393) rotate(-14.400)" textLength="261" lengthAdjust="spacingAndGlyphs">Prince B.A.P</text>
        <circle cx="808" cy="392.500" r="3" fill="#00f"/>
        <g stroke="#f00" fill="#f00"><path d="M1235 283l-14.500 3.300L1211 257" fill="none"/><path d="M1210.500 256l5.500 9-5 1.500zM1236 282.500l-8 5-1-4.500z"/></g>
        <g stroke-width="3.500"><path d="M359 517l-4.500-21" stroke="#186b1b"/><path d="M353.500 489l-3.500 10 8-1.500z" fill="#186b1b"/><path d="M359 517l-20 5" stroke="#1a1ad6"/><path d="M331.500 524l8-6 2 6.500z" fill="#1a1ac8"/><circle cx="366" cy="518" r="4.500" fill="#a31515"/><path d="M357 515h4v4h-4z" fill="#521"/></g>
        <g class="axes"><text x="349" y="487" fill="#080">Y</text><text x="324" y="528" fill="#00f">Z</text><text x="366" y="522" fill="#e00">X</text></g>
      </svg>
    </div>
  </div>
</main>

<section class="motion">
  <div class="mbar">
    <span class="combo"><span>Animation</span><svg viewBox="0 0 10 6"><path d="M1 1l4 4 4-4" fill="none" stroke="#555"/></svg></span>
    <i class="sp s1"></i>
    <span class="mc"><svg><use href="#calc"/></svg></span>
    <span class="mc"><svg viewBox="0 0 20 20"><path d="M3 5h2v11H3zM7 5l11 5.500L7 16z" fill="#222"/></svg></span>
    <span class="mc"><svg viewBox="0 0 20 20"><path d="M5 5l10 5.500L5 16z" fill="#222"/></svg></span>
    <span class="mc"><svg viewBox="0 0 20 20"><path d="M5 5h10v10H5z" fill="#c3c3c3"/></svg></span>
    <span class="slider"><b></b></span>
    <span class="speed"><mark>1x</mark><svg viewBox="0 0 10 6"><path d="M1 1l4 4 4-4" fill="none" stroke="#555"/></svg></span>
    <span class="mc"><svg viewBox="0 0 20 20"><path d="M3 9h8V5l8 5.500-8 5.500v-4H3z" fill="#222"/></svg></span><i class="dn"></i>
    <span class="mc m29"><svg><use href="#film"/></svg></span><i class="sp"></i>
    <span class="mc m36"><svg><use href="#wizard"/></svg></span><i class="sp"></i>
    <span class="mc key"><svg><use href="#autokey"/></svg></span>
    <span class="mc m28"><svg><use href="#addkey"/></svg></span><i class="sp"></i>
    <span class="mc m36"><svg><use href="#motor"/></svg></span><span class="mc m18"><svg><use href="#spring"/></svg></span><span class="mc m36"><svg><use href="#contact"/></svg></span><span class="mc m26"><svg><use href="#gravity"/></svg></span><i class="sp"></i>
    <span class="mc m36"><svg><use href="#gear"/></svg></span><i class="sp"></i>
  </div>
  <div class="mbody">
    <div class="mleft">
      <div class="mfilter"><span class="mf on2"><svg><use href="#ffun"/></svg></span><span class="mf"><svg><use href="#fcam"/></svg></span><span class="mf"><svg><use href="#fgear"/></svg></span><span class="mf"><svg><use href="#fsel"/></svg></span><span class="mf"><svg><use href="#fres"/></svg></span></div>
      <ul class="mtree">
        <li class="root"><i class="dn"></i><svg><use href="#assem"/></svg><span class="n2">Assemblage_Fixations_RouesArrières (Default) &lt;D</span></li>
        <li><i></i><svg><use href="#scope"/></svg><span>Orientation et vues de caméra</span></li>
        <li><i class="right"></i><svg><use href="#flight"/></svg><span>Lights, Cameras and Scene</span></li>
        <li><i></i><svg><use href="#motor"/></svg><span>Moteur circulaire1</span></li>
        <li><i class="right"></i><svg><use href="#part"/></svg><span class="n1">(-) Fixation_RouesArrières_1&lt;1&gt; (Default) &lt;&lt;I</span></li>
        <li><i class="right"></i><svg><use href="#part"/></svg><span class="n1">(-) Fixations_RouesArrières_2&lt;1&gt; (Default) &lt;&lt;</span></li>
        <li><i class="right"></i><svg><use href="#clips"/></svg><span>Mates</span></li>
      </ul>
      <div class="mfoot"></div>
    </div>
    <div class="mright">
      <svg class="timeline" viewBox="318 603 1016 198">
        <defs>
          <pattern id="tick" x="367" y="603" width="113" height="30" patternUnits="userSpaceOnUse"><path d="M0 3h1v26H0zM12 21h1v8h-1zM23 21h1v8h-1zM34 21h1v8h-1zM46 21h1v8h-1zM57 17h1v12h-1zM68 21h1v8h-1zM80 21h1v8h-1zM91 21h1v8h-1zM102 21h1v8h-1z" fill="#666"/></pattern>
          <pattern id="grid" x="367" y="633" width="113" height="168" patternUnits="userSpaceOnUse"><path d="M0 0h1v168H0z" fill="#bbb"/></pattern>
          <path id="dia" d="M0-9.500L5 0 0 9.500-5 0z"/>
        </defs>
        <path d="M318 603h1016v30H318z" fill="#cbcbcb"/><path d="M368 603h952v30H368z" fill="#ffff80"/>
        <path d="M369 603h951v30H369z" fill="url(#tick)"/><path d="M368 606h1v26h-1z" fill="#666"/><path d="M1320 603h7v30h-7z" fill="#f00"/><path d="M1327 620h1v12h-1z" fill="#666"/>
        <path d="M369 633h965v168H369z" fill="url(#grid)"/><path d="M368 633h1v167h-1z" fill="#bbb"/>
        <g class="secs"><text x="370" y="617">0 sec</text><text x="482" y="617">2 sec</text><text x="595" y="617">4 sec</text><text x="708" y="617">6 sec</text><text x="821" y="617">8 sec</text><text x="934" y="617">10 sec</text><text x="1047" y="617">12 sec</text><text x="1160" y="617">14 sec</text><text x="1273" y="617">16 sec</text></g>
        <path d="M368 644h959v1H368z"/>
        <path d="M368 703h959v15H368zM368 769h959v15H368z" fill="#cdac4b"/><path d="M368 747h945v5H368z" fill="#ff0"/>
        <path d="M400 603h2v197h-2z" fill="#808080"/>
        <use href="#dia" x="368" y="644.500"/><use href="#dia" x="368" y="666.500"/><use href="#dia" x="368" y="688.500" fill="#999"/>
        <g fill="#00f" stroke="#000" stroke-width=".8"><use href="#dia" x="368" y="710.500"/><use href="#dia" x="368" y="732.500"/><use href="#dia" x="368" y="754.500"/></g><use href="#dia" x="368" y="776.500" fill="#999"/>
        <path d="M1327 633l6 11.500-6 11.500-6-11.500z" fill="#55a9fb"/>
      </svg>
      <div class="hbar2"><b></b></div>
    </div>
  </div>
</section>

<nav class="btabs">
  <span class="navb"><svg viewBox="0 0 64 15"><path d="M15.500 0v15M31.500 0v15M47.500 0v15M63.500 0v15" stroke="#777"/><path d="M4.500 3v9M58.500 3v9" stroke="#858585" stroke-width="1.500"/><path d="M11 3v9L6 7.500zM26 3v9l-5-4.500zM38 3v9l5-4.500zM53 3v9l5-4.500z" fill="#858585"/></svg></span>
  <span class="bt1">Modèle</span><span class="bt2">Etude de mouvement 1</span><span class="bt3"></span>
</nav>
<footer class="status"><span class="st0">SOLIDWORKS Edition étudiante - Utilisation universitaire uniquement</span><span class="st1">-0.09m</span><span class="st2">0.02m</span><span class="st3">0m</span><span class="st4">Sous-contrainte</span><span class="st5">Edition: Esquisse1</span></footer>
<div class="taskbar"></div>
</body>
</html>
```
FILE: styles.css
```css
*, *::before { box-sizing: border-box; }
body { margin: 0; width: 1334px; height: 856px; overflow: hidden; background: #f7f7f7; font: 11.5px/13px "Noto Sans", "Open Sans", sans-serif; letter-spacing: -.15px; color: #111; display: flex; flex-direction: column; }
svg { width: 20px; height: 20px; flex: none; display: block; }
.defs { position: absolute; width: 0; height: 0; }
i { flex: none; font-style: normal; }
ul { list-style: none; margin: 0; padding: 0; }
.dn::before { content: ""; display: block; margin: 0 auto; width: 6px; border: 3px solid transparent; border-top-color: #333; border-bottom: 0; }
.dn.off::before, .dis .dn::before, .hud .dn::before { border-top-color: #999; }
.right::before { content: ""; display: block; margin: 0 auto; width: 5px; border: 4px solid transparent; border-left: 5px solid #555; border-right: 0; }

.titlebar { height: 35px; border-top: 1px solid #c5c5c5; border-bottom: 1px solid #c0c0c0; display: flex; align-items: center; flex: none; }
.brand { width: 126px; display: flex; align-items: center; padding-left: 3px; }
.brand svg { width: 24px; height: 26px; }
.logotype { color: #d9322a; font: italic 14px/20px Lato, sans-serif; margin-left: 3px; letter-spacing: -.4px; }
.logotype b { font-weight: 900; }
.right.big { width: 17px; height: 34px; border-right: 1px solid #c0c0c0; padding-top: 12px; }
.right.big::before { border-width: 5px 0 5px 5px; border-left-color: #777; margin-left: 5px; }
.quick { display: flex; align-items: center; height: 30px; padding-left: 21px; width: 570px; }
.cell { width: 30px; display: flex; justify-content: center; }
.quick .dn { width: 14px; }
.cell svg { width: 19px; height: 19px; }
.pressed { width: 30px; height: 30px; align-items: center; background: #b3b3b3; border: 1px solid #777; }
.split { width: 14px; height: 30px; border: 1px solid #999; border-left: 0; display: flex; align-items: center; }
.t-doc { font-size: 11.300px; letter-spacing: -.24px; white-space: nowrap; }
.doc { width: 417px; }
.search { flex: 1; height: 23px; border: 1px solid #b5b5b5; border-right: 0; background: #fff; display: flex; align-items: center; gap: 6px; padding-left: 6px; color: #555; white-space: nowrap; font-size: 11.300px; letter-spacing: -.3px; }
.prompt { background: #222; width: 14px; height: 14px; }
.prompt svg { width: 14px; height: 14px; }

.ribbon { height: 82px; border-bottom: 1px solid #828282; display: flex; padding: 1px 0 3px 3px; flex: none; font-size: 11px; }
.rb { height: 78px; display: flex; flex-direction: column; align-items: center; padding-top: 5px; text-align: center; white-space: nowrap; }
.rb > .dn { margin-top: auto; padding-bottom: 9px; }
.quit { width: 54px; padding: 0; border: 1px solid #8d8d8d; }
.face { width: 52px; height: 58px; background: #b3b3b3; border-bottom: 1px solid #888; padding-top: 4px; display: flex; flex-direction: column; align-items: center; }
.drop { flex: 1; padding-top: 7px; }
.w70 { width: 70px; } .w62 { width: 62px; } .w63 { width: 63px; } .w48 { width: 48px; } .w57 { width: 57px; } .w108 { width: 108px; } .w61 { width: 61px; } .w81 { width: 81px; } .w56 { width: 56px; }
.sep { border-right: 1px solid #c5c5c5; }
.dis { color: #aaa; }
.on { width: 64px; margin-left: 3px; background: #b3b3b3; border: 1px solid #777; padding-top: 4px; }
.tools { width: 150px; margin-right: 2px; border: solid #c5c5c5; border-width: 0 1px; display: grid; grid-template-columns: 20px 20px 20px 20px 20px 20px 20px; grid-template-rows: repeat(3, 26px); align-items: center; padding-left: 4px; }
.tools .dn, .tools i { width: 18px; }
.tools svg { width: 19px; height: 19px; }
.txticon { font: 20px/20px "Liberation Serif", serif; color: #f7f7f7; -webkit-text-stroke: 1.2px #24749b; text-align: center; }
.rlist { width: 220px; border-right: 1px solid #c5c5c5; padding-left: 2px; }
.rlist div { display: flex; align-items: center; height: 26px; padding-bottom: 2px; }
.rlist svg { width: 18px; height: 18px; margin-right: 7px; }
.rlist .dn { margin-left: auto; width: 18px; }
.wide { letter-spacing: .03px; }

.work { flex: none; height: 458px; background:
  linear-gradient(transparent 50%, #fff 68%, #fff 86%, #f5f6fa 100%),
  radial-gradient(ellipse 970px 270px at 380px 0, #fff 48%, transparent 100%),
  linear-gradient(90deg, #e0e4ee 40%, #d9dce8 100%); }
.top { height: 22px; display: flex; }
.cmdtabs { display: flex; height: 22px; background: #f7f7f7; }
.cmdtabs span { background: #d3d3d3; border: solid #848484; border-width: 0 1px 1px 0; text-align: center; line-height: 21px; white-space: nowrap; color: #222; }
.cmdtabs .act { background: #f7f7f7; border-bottom: 0; font-weight: bold; }
.ct1 { width: 80px; } .ct2 { width: 166px; } .cmdtabs .ct3 { width: 60px; font-size: 11px; letter-spacing: -.2px; color: #333; } .ct4 { width: 71px; } .ct5 { width: 56px; } .ct6 { width: 182px; } .ct7 { width: 59px; }
.hud { display: flex; align-items: center; gap: 6px; padding-left: 121px; height: 30px; }
.hud svg { width: 20px; height: 20px; }
.hud .dn { width: 8px; }
.split2 { display: flex; height: 436px; }
.panel { width: 317px; background: #f7f7f7; border-right: 1px solid #868686; display: flex; flex-direction: column; height: 436px; margin-right: 1px; }
.grip { margin: 4px 2px 4px 0; height: 16px; border: solid #c5c5c5; border-width: 1px 0; display: flex; justify-content: center; align-items: center; }
.grip i, .handle i { width: 6px; height: 6px; border: 1px solid #888; background: #ddd; border-radius: 50%; }
.ptabs { display: flex; height: 26px; margin-left: 2px; border-bottom: 1px solid #bbb; align-items: center; }
.ptabs span { width: 40px; height: 26px; border: 1px solid #888; border-left: 0; background: #d3d3d3; display: flex; align-items: center; justify-content: center; }
.ptabs .act { background: #f7f7f7; border-bottom: 0; }
.ptabs .chev { width: 10px; height: 12px; margin-left: 98px; }
.filter { height: 26px; margin: 0 4px 0 5px; border: 1px solid #c0c0c0; display: flex; align-items: center; padding-left: 2px; }
.filter svg { width: 18px; height: 18px; }
.filter .dn { width: 8px; padding-top: 6px; }
.treebox { display: flex; height: 338px; border-left: 1px solid #c5c5c5; }
.tree { width: 298px; overflow: hidden; }
.tree li, .mtree li { display: flex; align-items: center; height: 22px; padding-left: 24px; white-space: nowrap; }
.tree li svg { width: 19px; height: 19px; }
.tree li > i { width: 20px; margin-right: 5px; }
.tree li > span { margin-left: 4px; padding-bottom: 2px; }
.tree li.root { padding-left: 0; }
.tree li.root > i { width: 20px; margin-right: 5px; }
.tree li.root svg { margin-right: 4px; width: 20px; }
.tree li.root > span { margin-left: 0; }
.tree li.last > span { padding-bottom: 5px; }
.n1 { letter-spacing: -.02px; }
.n2 { letter-spacing: -.17px; }
.afold { display: grid; }
.tree li > .afold { margin-left: 0; padding: 0; }
.afold svg, .afold b { grid-area: 1 / 1; }
.afold b { font: bold 12px/23px "Liberation Serif", serif; color: #1e678c; text-align: center; }
.root .dn::before { border-width: 4px 4px 0; width: 8px; border-top-color: #555; }
.vbar { width: 15px; background: #f0f0f0; display: flex; flex-direction: column; align-items: center; padding: 5px 0; margin-left: 1px; }
.up { border: 5px solid transparent; border-bottom: 7px solid #777; border-top: 0; }
.down { border: 5px solid transparent; border-top: 7px solid #555; border-bottom: 0; margin-top: auto; }
.vbar b { width: 6px; height: 105px; background: #858585; border-radius: 3px; margin-top: 60px; }
.hbar { height: 17px; background: #f0f0f0; padding: 8px 0 0 18px; border-top: 1px solid #fff; }
.hbar b { display: block; width: 163px; height: 2px; background: #888; }
.edge { margin-top: 2px; height: 3px; border: solid #bbb; border-width: 1px 0; }
.view { position: relative; width: 1016px; height: 436px; }
.scene { width: 1016px; height: 435px; }
.handle { position: absolute; left: -2px; top: 187px; width: 11px; height: 39px; background: #f7f7f7; border: 1px solid #868686; border-left: 0; display: flex; align-items: center; justify-content: center; }
.sketch { font: 50px Lato, sans-serif; letter-spacing: 0; fill: none; stroke: #00f; stroke-width: 2px; }
.axes { font: 10px "Liberation Sans", sans-serif; }

.motion { height: 243px; flex: none; border-left: 2px solid #93adb3; }
.mbar { height: 28px; display: flex; align-items: center; padding-bottom: 1px; }
.mbar i { flex: none; }
.combo { width: 144px; height: 22px; margin: 2px 0 0 2px; border: 1px solid #bbb; background: #fff; border-radius: 2px; display: flex; align-items: center; justify-content: space-between; padding: 0 4px 0 3px; }
.combo svg, .speed svg { width: 9px; height: 6px; }
.sp { width: 1px; height: 22px; background: #999; }
.s1 { margin: 0 3px; }
.mc { width: 27.200px; display: flex; justify-content: center; align-items: center; }
.mc svg { width: 19px; height: 19px; }
.slider { width: 184px; height: 4px; border: 1px solid #d0d0d0; background: #e7e7e7; margin: -3px 8px 0 8px; }
.slider b { display: block; width: 11px; height: 20px; margin: -9px 0 0 5px; background: #0078d7; clip-path: polygon(0 0, 100% 0, 100% 75%, 50% 100%, 0 75%); }
.speed { width: 80px; height: 22px; border: 1px solid #999; background: #fff; border-radius: 2px; display: flex; justify-content: space-between; align-items: center; padding: 0 4px 0 5px; margin-top: -2px; }
mark { background: #0078d7; color: #fff; height: 14px; line-height: 13px; letter-spacing: -.3px; }
.mbar .dn { width: 14px; }
.m29 { width: 30px; } .m36 { width: 35px; } .m28 { width: 28px; } .m18 { width: 19px; } .m26 { width: 21px; margin-right: 5px; }
.key { width: 27px; height: 27px; border: 1px solid #777; background: #b3b3b3; margin: 0 0 0 5px; }
.mbody { display: flex; height: 215px; }
.mleft { width: 314px; padding: 0 0 0 1px; border-right: 1px solid #414a78; display: flex; flex-direction: column; }
.mfilter { height: 30px; background: #cbcbcb; display: flex; padding-left: 175px; margin-right: 2px; }
.mf { width: 27px; height: 26px; display: flex; align-items: center; justify-content: center; }
.mf svg { width: 19px; height: 19px; }
.on2 { border: 1px solid #777; background: #b3b3b3; }
.mtree { height: 167px; overflow: hidden; margin-right: 2px; }
.mtree li { padding-left: 24px; }
.mtree li > i { width: 20px; margin-right: 5px; }
.mtree li svg { width: 19px; height: 19px; }
.mtree li > span { margin-left: 4px; }
.mtree li.root { padding-left: 0; }
.mtree li.root > i { width: 21px; margin-right: 5px; }
.mtree li.root > span { margin-left: 4px; }
.mfoot { height: 17px; background: #cbcbcb; margin-right: 2px; }
.mright { width: 1018px; border-left: 1px solid #414a78; padding-left: 1px; }
.timeline { width: 1016px; height: 198px; }
.secs { font: bold 11.500px "Noto Sans", sans-serif; letter-spacing: 0; fill: #666; }
.hbar2 { height: 17px; background: #f0f0f0; border-top: 1px solid #fff; padding: 6px 0 0 17px; }
.hbar2 b { display: block; height: 2px; background: #868686; }

.btabs { height: 16px; display: flex; flex: none; border-bottom: 1px solid #868686; line-height: 14px; }
.navb { width: 67px; background: #bbb; border-top: 1px solid #333; padding-left: 2px; }
.navb svg { width: 64px; height: 14px; }
.bt1 { width: 64px; background: #d0d0d0; border: solid #868686; border-width: 1px 1px 0 0; text-align: center; padding-left: 6px; line-height: 12px; }
.bt2 { width: 154px; font-weight: bold; border-right: 1px solid #868686; padding-left: 6px; white-space: nowrap; letter-spacing: -.05px; }
.bt3 { flex: 1; border-top: 1px solid #868686; background: #fff; }
.status { height: 19px; flex: none; display: flex; justify-content: flex-end; padding: 3px 11px 0 1px; white-space: nowrap; }
.st0 { flex: 1; } .st1 { width: 64px; } .st2 { width: 47px; } .st3 { width: 37px; } .st4 { width: 102px; } .st5 { width: 93px; }
.taskbar { height: 4px; background: #14242e; flex: none; }
```
